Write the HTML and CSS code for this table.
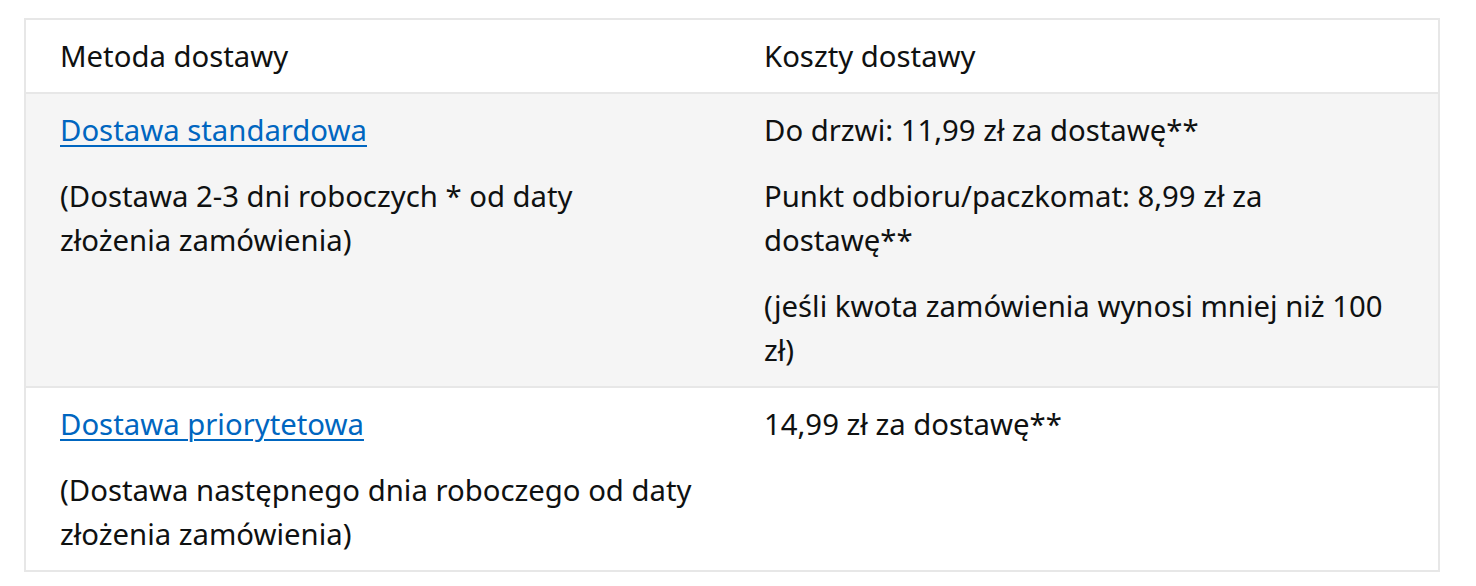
FILE: index.html
```html
<!DOCTYPE html>
<html lang="pl">
<head>
<meta charset="utf-8">
<link rel="stylesheet" href="styles.css">
</head>
<body>
<table class="ship">
  <thead>
    <tr>
      <th class="col-method">Metoda dostawy</th>
      <th class="col-cost">Koszty dostawy</th>
    </tr>
  </thead>
  <tbody>
    <tr class="alt">
      <td>
        <p><a href="#">Dostawa standardowa</a></p>
        <p>(Dostawa 2-3 dni roboczych * od daty <span class="nw">złożenia zamówienia)</span></p>
      </td>
      <td>
        <p>Do drzwi: 11,99 zł za dostawę**</p>
        <p>Punkt odbioru/paczkomat: 8,99 zł za dostawę**</p>
        <p>(jeśli kwota zamówienia wynosi mniej niż 100 zł)</p>
      </td>
    </tr>
    <tr>
      <td>
        <p><a href="#">Dostawa priorytetowa</a></p>
        <p>(Dostawa następnego dnia roboczego od daty <span class="nw">złożenia zamówienia)</span></p>
      </td>
      <td>
        <p>14,99 zł za dostawę**</p>
      </td>
    </tr>
  </tbody>
</table>
</body>
</html>
```

FILE: styles.css
```css
html, body {
  margin: 0;
  padding: 0;
  background: #ffffff;
}
body {
  padding: 18px 36px 0 24px;
  font-family: "Noto Sans", "Open Sans", sans-serif;
  font-size: 29.3px;
  line-height: 44px;
  color: #0f1111;
}
.ship {
  width: 1416px;
  border-collapse: collapse;
  border: 2px solid #e7e7e7;
  table-layout: fixed;
}
.ship th, .ship td {
  text-align: left;
  vertical-align: top;
  font-weight: normal;
  padding: 14px 35px 14px 34px;
  border-top: 2px solid #e7e7e7;
}
.col-method { width: 635px; }
.ship td p {
  margin: 0 0 22px 0;
}
.ship td p:last-child {
  margin-bottom: 0;
}
.nw {
  white-space: nowrap;
}
.alt td {
  background: #f5f5f5;
}
.ship a {
  color: #0066c0;
  text-decoration: underline;
  text-underline-offset: 4px;
  text-decoration-thickness: 2px;
}
```
